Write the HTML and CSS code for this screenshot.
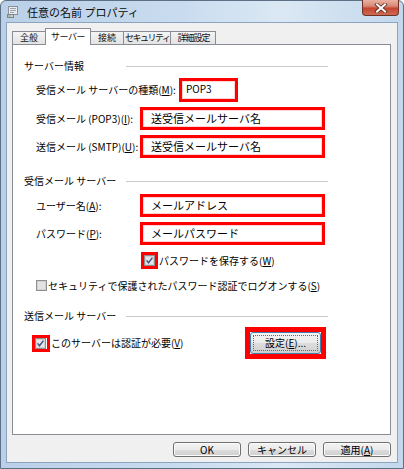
FILE: index.html
```html
<!DOCTYPE html>
<html lang="ja">
<head>
<meta charset="utf-8">
<title>任意の名前 プロパティ</title>
<link rel="stylesheet" href="styles.css">
</head>
<body>
<div class="window">
  <div class="titlebar">
    <svg class="app-icon" width="12" height="12" viewBox="0 0 12 12">
      <rect x="1.5" y="0.5" width="9" height="8" fill="#e9ecef" stroke="#8a9099"/>
      <rect x="3" y="2" width="6" height="1" fill="#9aa1aa"/>
      <rect x="3" y="4" width="6" height="1" fill="#9aa1aa"/>
      <rect x="3" y="6" width="4" height="1" fill="#9aa1aa"/>
      <rect x="0.5" y="8.5" width="6" height="3" fill="#c9ced4" stroke="#7d848d"/>
      <rect x="1.5" y="9.5" width="2" height="1" fill="#4fae3c"/>
    </svg>
    <span class="title">任意の名前 プロパティ</span>
    <div class="close">
      <svg width="14" height="10" viewBox="0 0 14 10">
        <path d="M3 1.5 L11 8.5 M11 1.5 L3 8.5" stroke="#5a2a22" stroke-width="3.6" stroke-linecap="square"/>
        <path d="M3 1.5 L11 8.5 M11 1.5 L3 8.5" stroke="#ffffff" stroke-width="2" stroke-linecap="square"/>
      </svg>
    </div>
  </div>

  <div class="client">
    <div class="tabs">
      <div class="tab">全般</div>
      <div class="tab tab-active">サーバー</div>
      <div class="tab">接続</div>
      <div class="tab tab-tight">セキュリティ</div>
      <div class="tab tab-snug">詳細設定</div>
    </div>

    <div class="panel">
      <div class="heading">
        <span class="heading-label">サーバー情報</span><span class="rule"></span>
      </div>

      <div class="field field-type">
        <span class="field-label field-label-wide">受信メール サーバーの種類(<u>M</u>):</span>
        <span class="hl hl-small">POP3</span>
      </div>
      <div class="field field-gap5">
        <span class="field-label">受信メール (POP3)(<u>I</u>):</span>
        <span class="hl">送受信メールサーバ名</span>
      </div>
      <div class="field field-gap5">
        <span class="field-label">送信メール (SMTP)(<u>U</u>):</span>
        <span class="hl">送受信メールサーバ名</span>
      </div>

      <div class="heading heading-gap">
        <span class="heading-label">受信メール サーバー</span><span class="rule"></span>
      </div>

      <div class="field field-gap7">
        <span class="field-label">ユーザー名(<u>A</u>):</span>
        <span class="hl">メールアドレス</span>
      </div>
      <div class="field field-gap5">
        <span class="field-label">パスワード(<u>P</u>):</span>
        <span class="hl">メールパスワード</span>
      </div>

      <div class="check-row check-save">
        <span class="hl-check">
          <svg class="cb" width="11" height="11" viewBox="0 0 11 11">
            <rect x="0.5" y="0.5" width="10" height="10" fill="#f6f6f6" stroke="#8e8f8f"/>
            <rect x="1.5" y="1.5" width="8" height="8" fill="#e6e6e6" stroke="#d2d2d2"/>
            <path d="M2.6 5.4 L4.5 7.8 L8.4 2.6" fill="none" stroke="#3f5591" stroke-width="1.5"/>
          </svg>
        </span>
        <span class="check-text">パスワードを保存する(<u>W</u>)</span>
      </div>

      <div class="check-row check-secure">
        <svg class="cb" width="11" height="11" viewBox="0 0 11 11">
          <rect x="0.5" y="0.5" width="10" height="10" fill="#f6f6f6" stroke="#8e8f8f"/>
          <rect x="1.5" y="1.5" width="8" height="8" fill="#e3e3e3" stroke="#d2d2d2"/>
        </svg>
        <span class="check-text">セキュリティで保護されたパスワード認証でログオンする(<u>S</u>)</span>
      </div>

      <div class="heading heading-gap3">
        <span class="heading-label">送信メール サーバー</span><span class="rule"></span>
      </div>

      <div class="auth-row">
        <span class="hl-check">
          <svg class="cb" width="11" height="11" viewBox="0 0 11 11">
            <rect x="0.5" y="0.5" width="10" height="10" fill="#f6f6f6" stroke="#8e8f8f"/>
            <rect x="1.5" y="1.5" width="8" height="8" fill="#e6e6e6" stroke="#d2d2d2"/>
            <path d="M2.6 5.4 L4.5 7.8 L8.4 2.6" fill="none" stroke="#3f5591" stroke-width="1.5"/>
          </svg>
        </span>
        <span class="check-text">このサーバーは認証が必要(<u>V</u>)</span>
        <span class="hl-button">
          <span class="btn-focus"><span class="focus-ring">設定(<u>E</u>)...</span></span>
        </span>
      </div>
    </div>

    <div class="buttons">
      <div class="btn">OK</div>
      <div class="btn">キャンセル</div>
      <div class="btn">適用(<u>A</u>)</div>
    </div>
  </div>
</div>
</body>
</html>
```

FILE: styles.css
```css
* {
  box-sizing: border-box;
}

html,
body {
  margin: 0;
  padding: 0;
}

body {
  width: 404px;
  height: 469px;
  overflow: hidden;
  background: #ffffff;
  font-family: "Noto Sans CJK JP", "Noto Sans", sans-serif;
  font-size: 10px;
  color: #000000;
}

u {
  text-decoration: underline;
  text-underline-offset: 1px;
}

.window {
  width: 404px;
  height: 469px;
  border: 1px solid #5d7085;
  border-radius: 6px 6px 0 0;
  background: linear-gradient(to right, #bad0e8 0%, #c9dcef 45%, #dbe8f4 70%, #c3d7ec 100%);
  padding: 0 5px 5px 5px;
  display: flex;
  flex-direction: column;
}

/* ---------- title bar ---------- */
.titlebar {
  height: 21px;
  flex-shrink: 0;
  display: flex;
  align-items: center;
}

.app-icon {
  margin-left: 1px;
  margin-top: 1px;
  flex-shrink: 0;
}

.title {
  margin-left: 8px;
  font-size: 11px;
  line-height: 14px;
  color: #0c0c0c;
  white-space: nowrap;
}

.close {
  margin-left: auto;
  margin-right: -1px;
  margin-top: -1px;
  align-self: flex-start;
  width: 37px;
  height: 16px;
  border: 1px solid #6e3128;
  border-top: none;
  border-radius: 0 0 4px 4px;
  background: linear-gradient(#e9b0a2 0%, #d98a76 40%, #c4452f 55%, #cf6a52 100%);
  display: flex;
  align-items: center;
  justify-content: center;
}

/* ---------- client area ---------- */
.client {
  flex: 1;
  background: #f0f0f0;
  border: 1px solid #8ca4bf;
  padding: 5px 6px 0 5px;
  display: flex;
  flex-direction: column;
}

.tabs {
  height: 16px;
  display: flex;
  align-items: flex-end;
}

.tab {
  height: 13px;
  padding: 0 7px;
  margin-right: -1px;
  border: 1px solid #898c95;
  border-bottom: none;
  background: linear-gradient(#f4f4f4, #e3e3e3);
  font-size: 9px;
  line-height: 12px;
  white-space: nowrap;
  color: #111111;
}

.tab-active {
  position: relative;
  height: 17px;
  margin-bottom: -1px;
  padding: 1px 5px 0 5px;
  line-height: 13px;
  background: #ffffff;
  letter-spacing: -0.5px;
}

.tab-tight {
  padding: 0 1px;
  letter-spacing: -1.5px;
}

.tab-snug {
  padding: 0 6px;
  letter-spacing: -1px;
}

.panel {
  height: 391px;
  flex-shrink: 0;
  background: #ffffff;
  border: 1px solid #898c95;
  padding: 15px 62px 0 11px;
  display: flex;
  flex-direction: column;
}

/* ---------- section headings ---------- */
.heading {
  height: 12px;
  display: flex;
  align-items: center;
}

.heading-gap {
  margin-top: 17px;
}

.heading-gap3 {
  margin-top: 19px;
}

.heading-label {
  min-width: 98px;
  margin-right: 4px;
  line-height: 12px;
  white-space: nowrap;
}

.rule {
  flex: 1;
  height: 1px;
  background: #cacaca;
}

/* ---------- fields ---------- */
.field {
  display: flex;
  align-items: center;
  padding-left: 12px;
}

.field-type {
  margin-top: 6px;
}

.field-gap5 {
  margin-top: 5px;
}

.field-gap7 {
  margin-top: 7px;
}

.field-label {
  width: 104px;
  flex-shrink: 0;
  white-space: nowrap;
  line-height: 12px;
}

.field-label-wide {
  width: 143px;
}

.hl {
  width: 185px;
  height: 23px;
  border: 3px solid #ff0000;
  background: #ffffff;
  padding-left: 8px;
  font-size: 11px;
  line-height: 15px;
  display: flex;
  align-items: center;
  white-space: nowrap;
  box-shadow: inset 0 0 0 1px #ffd4d4;
}

.hl-small {
  width: 59px;
  height: 24px;
  padding-left: 4px;
  padding-bottom: 3px;
  font-size: 10px;
}

/* ---------- checkboxes ---------- */
.cb {
  display: block;
  flex-shrink: 0;
}

.hl-check {
  width: 17px;
  height: 17px;
  border: 3px solid #ff0000;
  flex-shrink: 0;
}

.check-row {
  display: flex;
  align-items: center;
  padding-left: 12px;
}

.check-save {
  margin-top: 7px;
}

.check-save .hl-check {
  margin-left: 105px;
}

.check-secure {
  margin-top: 11px;
  height: 11px;
}

.check-text {
  margin-left: 1px;
  line-height: 12px;
  white-space: nowrap;
}

/* ---------- outgoing server row ---------- */
.auth-row {
  margin-top: 5px;
  height: 32px;
  display: flex;
  align-items: center;
  padding-left: 8px;
}

.auth-row .hl-check {
  width: 18px;
}

.hl-button {
  margin-left: auto;
  margin-right: 2px;
  width: 81px;
  height: 32px;
  border: 5px solid #ff0000;
  display: flex;
}

.btn-focus {
  flex: 1;
  border: 1px solid #3c7fb1;
  border-radius: 3px;
  background: linear-gradient(#f2f2f2 0%, #ebebeb 50%, #dddddd 51%, #cfcfcf 100%);
  padding: 2px;
  display: flex;
}

.focus-ring {
  flex: 1;
  border: 1px dotted #4f6f8f;
  display: flex;
  align-items: center;
  justify-content: center;
  line-height: 12px;
  white-space: nowrap;
}

/* ---------- dialog buttons ---------- */
.buttons {
  margin-top: 7px;
  display: flex;
  justify-content: flex-end;
  gap: 7px;
}

.btn {
  width: 68px;
  height: 15px;
  border: 1px solid #707070;
  border-radius: 3px;
  background: linear-gradient(#f2f2f2 0%, #ebebeb 50%, #dddddd 51%, #cfcfcf 100%);
  box-shadow: inset 0 0 0 1px #fbfbfb;
  font-size: 10px;
  line-height: 13px;
  text-align: center;
  white-space: nowrap;
}
```
